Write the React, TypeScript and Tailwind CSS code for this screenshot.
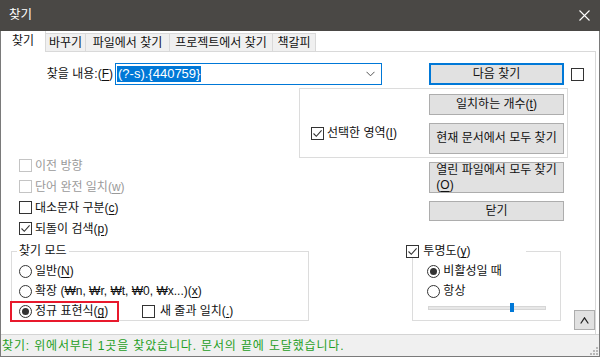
import React from "react";

const FONT = { fontFamily: '"Liberation Sans", "Noto Sans CJK KR", sans-serif' };

function Check({ checked = false, disabled = false }: { checked?: boolean; disabled?: boolean }) {
  return (
    <span
      className={
        disabled
          ? "w-[13px] h-[13px] border border-[#c4c4c4] bg-white flex items-center justify-center shrink-0"
          : "w-[13px] h-[13px] border border-[#333333] bg-white flex items-center justify-center shrink-0"
      }
    >
      {checked && (
        <svg width="11" height="11" viewBox="0 0 11 11">
          <path d="M1.5 5.5 L4.3 8.3 L9.6 2.4" stroke="#333" strokeWidth="1.1" fill="none" />
        </svg>
      )}
    </span>
  );
}

function Radio({ checked = false }: { checked?: boolean }) {
  return (
    <span className="w-[13px] h-[13px] rounded-full border border-[#333333] bg-white flex items-center justify-center shrink-0">
      {checked && <span className="w-[7px] h-[7px] rounded-full bg-[#333333]" />}
    </span>
  );
}

function U({ children }: { children: React.ReactNode }) {
  return <span className="underline underline-offset-2">{children}</span>;
}

function Btn({ children, className }: { children: React.ReactNode; className: string }) {
  return (
    <div className={"w-[135px] bg-[#e1e1e1] border border-[#adadad] flex flex-col items-center justify-center leading-[15px] text-[#111] " + className}>
      {children}
    </div>
  );
}

export default function App() {
  return (
    <div className="w-[600px] h-[357px] flex flex-col bg-white text-[12px] text-[#111] overflow-hidden" style={FONT}>
      {/* Title bar */}
      <div className="h-[31px] bg-[#4a4845] flex items-center justify-between pl-[9px] pr-[10px] shrink-0">
        <span className="text-white text-[12.5px]">찾기</span>
        <svg width="11" height="11" viewBox="0 0 11 11">
          <path d="M0.5 0.5 L10.5 10.5 M10.5 0.5 L0.5 10.5" stroke="#fff" strokeWidth="1.1" />
        </svg>
      </div>

      <div className="flex-1 flex flex-col border-x border-b border-[#7a7a7a] min-h-0">
        {/* Tabs */}
        <div className="h-[20px] flex items-end shrink-0 relative">
          <div className="w-[45px] h-[21px] bg-white border-r border-[#d9d9d9] flex items-center justify-center relative z-10 -mb-[1px] pb-[2px]">
            찾기
          </div>
          <div className="w-[40px] h-[18px] bg-[#f0f0f0] border-t border-r border-[#d9d9d9] flex items-center justify-center">바꾸기</div>
          <div className="w-[84px] h-[18px] bg-[#f0f0f0] border-t border-r border-[#d9d9d9] flex items-center justify-center">파일에서 찾기</div>
          <div className="w-[103px] h-[18px] bg-[#f0f0f0] border-t border-r border-[#d9d9d9] flex items-center justify-center">프로젝트에서 찾기</div>
          <div className="w-[43px] h-[18px] bg-[#f0f0f0] border-t border-r border-[#d9d9d9] flex items-center justify-center">책갈피</div>
        </div>

        {/* Panel */}
        <div className="h-[283px] border-t border-r border-[#d9d9d9] mr-[3px] bg-white flex flex-col shrink-0">
          {/* Row 1 */}
          <div className="flex items-center mt-[11px] h-[22px]">
            <div className="w-[112px] text-right">
              찾을 내용:(<U>F</U>)
            </div>
            <div className="ml-[2px] w-[267px] h-[22px] border border-[#0078d7] flex items-center pl-[1px] pr-[6px]">
              <span className="bg-[#0078d7] text-white h-[16px] flex items-center px-[1px] text-[13px]">(?-s).{"{"}440759{"}"}</span>
              <span className="flex-1" />
              <svg width="9" height="6" viewBox="0 0 9 6">
                <path d="M0.5 0.8 L4.5 4.8 L8.5 0.8" stroke="#555" strokeWidth="1" fill="none" />
              </svg>
            </div>
            <div className="ml-[47px] w-[135px] h-[22px] bg-[#e1e1e1] border-2 border-[#0078d7] flex items-center justify-center">
              다음 찾기
            </div>
            <div className="ml-[7px]">
              <Check />
            </div>
          </div>

          {/* Row 2: group box */}
          <div className="mt-[3px] ml-[298px] w-[269px] h-[70px] border border-[#dcdcdc] flex">
            <div className="w-[129px] pl-[11px] pt-[34px]">
              <div className="h-[20px] flex items-center gap-[3px]">
                <Check checked />
                <span>
                  선택한 영역(<U>I</U>)
                </span>
              </div>
            </div>
            <div className="flex flex-col">
              <Btn className="mt-[5px] h-[21px]">
                <span>
                  일치하는 개수(<U>t</U>)
                </span>
              </Btn>
              <Btn className="mt-[8px] h-[31px]">현재 문서에서 모두 찾기</Btn>
            </div>
          </div>

          {/* Row 3 */}
          <div className="flex items-start">
            <div className="ml-[18px] -mt-[3px] w-[410px] flex flex-col">
              <div className="h-[21px] flex items-center gap-[3px] text-[#9a9a9a]">
                <Check disabled />
                <span>이전 방향</span>
              </div>
              <div className="h-[21px] flex items-center gap-[3px] text-[#9a9a9a]">
                <Check disabled />
                <span>
                  단어 완전 일치(<U>w</U>)
                </span>
              </div>
              <div className="h-[21px] flex items-center gap-[3px]">
                <Check />
                <span>
                  대소문자 구분(<U>c</U>)
                </span>
              </div>
              <div className="h-[21px] flex items-center gap-[3px]">
                <Check checked />
                <span>
                  되돌이 검색(<U>p</U>)
                </span>
              </div>
            </div>
            <div className="flex flex-col">
              <Btn className="mt-[4px] h-[31px]">
                <span>
                  열린 파일에서 모두 찾기
                  <br />(<U>O</U>)
                </span>
              </Btn>
              <Btn className="mt-[8px] h-[20px]">닫기</Btn>
            </div>
          </div>

          {/* Row 4 */}
          <div className="flex items-start mt-[12px]">
            {/* Search mode group */}
            <div className="ml-[10px] w-[299px] h-[70px] border border-[#dcdcdc] relative pt-[9px] pl-[7px]">
              <div className="absolute -top-[9px] left-[5px] bg-white px-[2px] h-[16px] flex items-center">찾기 모드</div>
              <div className="h-[20px] flex items-center gap-[3px]">
                <Radio />
                <span>
                  일반(<U>N</U>)
                </span>
              </div>
              <div className="h-[20px] flex items-center gap-[3px]">
                <Radio />
                <span>
                  확장 (₩n, ₩r, ₩t, ₩0, ₩x...)(<U>x</U>)
                </span>
              </div>
              <div className="h-[20px] flex items-center">
                <div className="w-[123px] flex items-center gap-[3px]">
                  <Radio checked />
                  <span>
                    정규 표현식(<U>g</U>)
                  </span>
                </div>
                <div className="flex items-center gap-[5px]">
                  <Check />
                  <span>
                    새 줄과 일치(<U>.</U>)
                  </span>
                </div>
              </div>
              <div className="absolute left-[-2px] top-[49px] w-[109px] h-[21px] border-2 border-[#e8192c]" />
            </div>

            {/* Transparency group */}
            <div className="ml-[103px] w-[149px] h-[70px] border border-[#dcdcdc] relative pt-[9px] pl-[14px]">
              <div className="absolute -top-[8px] -left-[7px] w-[120px] h-[14px] bg-white flex items-center gap-[4px]">
                <Check checked />
                <span>
                  투명도(<U>y</U>)
                </span>
              </div>
              <div className="h-[20px] flex items-center gap-[3px]">
                <Radio checked />
                <span>비활성일 때</span>
              </div>
              <div className="h-[20px] flex items-center gap-[3px]">
                <Radio />
                <span>항상</span>
              </div>
              <div className="mt-[5px] ml-[1px] w-[118px] h-[4px] bg-[#e7e7e7] border border-[#d6d6d6] relative">
                <div className="absolute left-[81px] -top-[4px] w-[4px] h-[9px] bg-[#0078d7]" />
              </div>
            </div>

            <div className="ml-[13px] mt-[59px] w-[21px] h-[20px] bg-[#e1e1e1] border border-[#adadad] flex items-center justify-center">
              <svg width="9" height="7" viewBox="0 0 9 7">
                <path d="M0.7 6.5 L4.5 0.8 L8.3 6.5" stroke="#222" strokeWidth="1.2" fill="none" />
              </svg>
            </div>
          </div>
        </div>

        {/* Status bar */}
        <div className="flex-1 bg-[#f0f0f0] border-t border-[#d4d4d4] flex items-center pl-[1px] relative">
          <span className="text-[#1e9e1e] tracking-[0.85px]">찾기: 위에서부터 1곳을 찾았습니다. 문서의 끝에 도달했습니다.</span>
          <svg className="absolute right-[1px] bottom-[1px]" width="9" height="9" viewBox="0 0 9 9">
            <rect x="7" y="1" width="2" height="2" fill="#b8b8b8" />
            <rect x="4" y="4" width="2" height="2" fill="#b8b8b8" />
            <rect x="7" y="4" width="2" height="2" fill="#b8b8b8" />
            <rect x="1" y="7" width="2" height="2" fill="#b8b8b8" />
            <rect x="4" y="7" width="2" height="2" fill="#b8b8b8" />
            <rect x="7" y="7" width="2" height="2" fill="#b8b8b8" />
          </svg>
        </div>
      </div>
    </div>
  );
}
